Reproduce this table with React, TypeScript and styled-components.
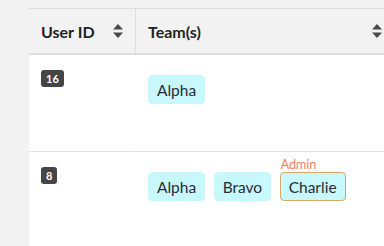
import React from "react";
import styled, { createGlobalStyle } from "styled-components";

const GlobalStyle = createGlobalStyle`
  html, body {
    margin: 0;
    padding: 0;
    overflow: hidden;
    background: #f2f2f2;
    font-family: Lato, "Open Sans", sans-serif;
  }
`;

type Team = { name: string; admin?: boolean };
type Row = { id: number; teams: Team[] };

const rows: Row[] = [
  { id: 16, teams: [{ name: "Alpha" }] },
  {
    id: 8,
    teams: [{ name: "Alpha" }, { name: "Bravo" }, { name: "Charlie", admin: true }],
  },
];

const Page = styled.div`
  padding: 8px 0 0 29px;
  width: 400px;
`;

const Table = styled.div`
  display: grid;
  grid-template-columns: 107px 258px;
  border-top: 1px solid #dddddd;
  background: #ffffff;
`;

const HeadCell = styled.div<{ $divider?: boolean }>`
  height: 44px;
  display: flex;
  align-items: center;
  justify-content: space-between;
  padding: 0 12px;
  background: #f2f2f2;
  border-bottom: 2px solid #dcdde0;
  border-right: ${(p) => (p.$divider ? "1px solid #dddddd" : "none")};
  font-weight: 700;
  font-size: 16px;
  color: #222222;
`;

const Cell = styled.div<{ $last?: boolean; $divider?: boolean }>`
  height: ${(p) => (p.$last ? "94px" : "96px")};
  padding: 0 12px;
  border-bottom: ${(p) => (p.$last ? "none" : "1px solid #e2e2e2")};
  border-right: ${(p) => (p.$divider ? "1px solid transparent" : "none")};
`;

const IdBadge = styled.span`
  display: inline-flex;
  align-items: center;
  height: 17px;
  margin-top: 15px;
  padding: 0 5px;
  border-radius: 3px;
  background: #454545;
  color: #ffffff;
  font-size: 11px;
  font-weight: 700;
`;

const TagList = styled.div`
  display: flex;
  gap: 8.5px;
  padding-top: 20px;
`;

const Tag = styled.span<{ $admin?: boolean }>`
  position: relative;
  display: inline-flex;
  align-items: center;
  box-sizing: border-box;
  height: 29px;
  padding: 0 8px;
  border-radius: 4px;
  background: #c6f8fc;
  border: 1px solid ${(p) => (p.$admin ? "#d8a86a" : "#c6f8fc")};
  color: #2b2b38;
  font-size: 15.5px;
`;

const AdminLabel = styled.span`
  position: absolute;
  left: 0;
  bottom: 100%;
  margin-bottom: 1px;
  font-size: 12.5px;
  color: #f07d62;
  line-height: 14px;
`;

const SortIcon = () => (
  <svg width="10" height="14" viewBox="0 0 10 14">
    <path d="M5 0 L10 5.5 H0 Z" fill="#4a4a4a" />
    <path d="M5 14 L10 8.5 H0 Z" fill="#4a4a4a" />
  </svg>
);

export default function App() {
  return (
    <Page>
      <GlobalStyle />
      <Table>
        <HeadCell $divider>
          <span>User ID</span>
          <SortIcon />
        </HeadCell>
        <HeadCell>
          <span>Team(s)</span>
          <SortIcon />
        </HeadCell>
        {rows.map((row, i) => {
          const last = i === rows.length - 1;
          return (
            <React.Fragment key={row.id}>
              <Cell $last={last} $divider>
                <IdBadge>{row.id}</IdBadge>
              </Cell>
              <Cell $last={last}>
                <TagList>
                  {row.teams.map((t) => (
                    <Tag key={t.name} $admin={t.admin}>
                      {t.admin && <AdminLabel>Admin</AdminLabel>}
                      {t.name}
                    </Tag>
                  ))}
                </TagList>
              </Cell>
            </React.Fragment>
          );
        })}
      </Table>
    </Page>
  );
}
